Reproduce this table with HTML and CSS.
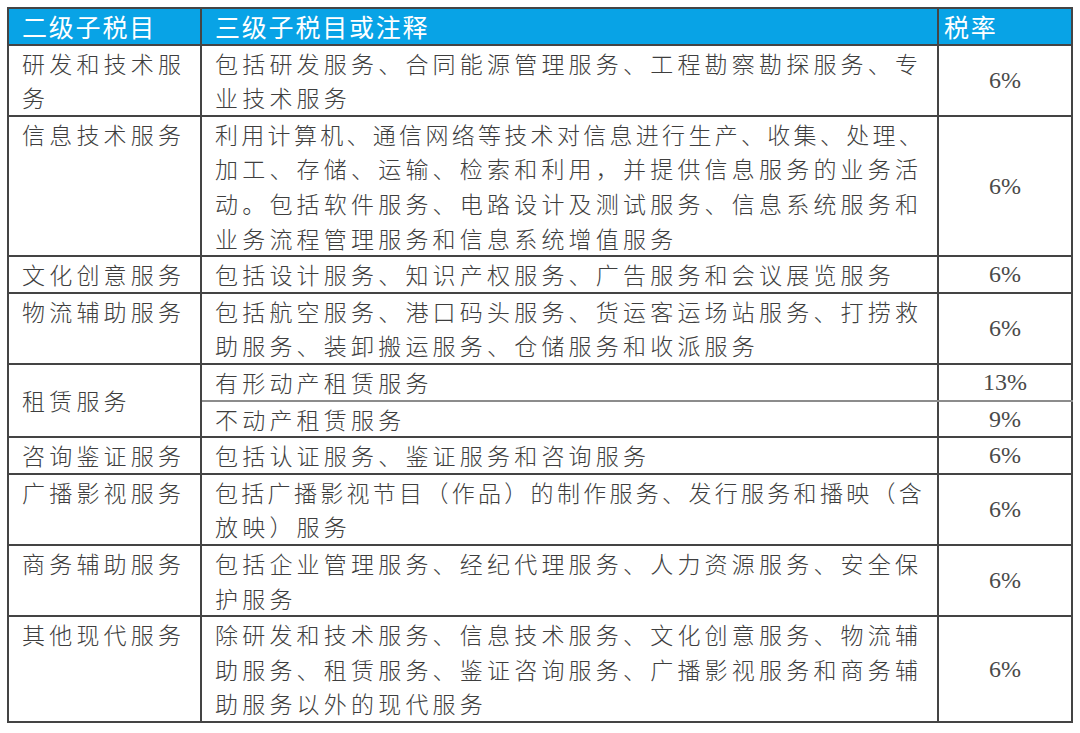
FILE: index.html
```html
<!DOCTYPE html>
<html lang="zh-CN">
<head>
<meta charset="utf-8">
<title>现代服务税目</title>
<link rel="stylesheet" href="styles.css">
</head>
<body>
<table class="tax">
  <colgroup>
    <col class="c1">
    <col class="c2">
    <col class="c3">
  </colgroup>
  <thead>
    <tr>
      <th>二级子税目</th>
      <th>三级子税目或注释</th>
      <th class="h-rate">税率</th>
    </tr>
  </thead>
  <tbody>
    <tr>
      <td class="name">研发和技术服<br>务</td>
      <td class="desc">包括研发服务、合同能源管理服务、工程勘察勘探服务、专<br>业技术服务</td>
      <td class="rate">6%</td>
    </tr>
    <tr>
      <td class="name">信息技术服务</td>
      <td class="desc"><span class="tight">利用计算机、通信网络等技术对信息进行生产、收集、处理、</span><br>加工、存储、运输、检索和利用，并提供信息服务的业务活<br>动。包括软件服务、电路设计及测试服务、信息系统服务和<br>业务流程管理服务和信息系统增值服务</td>
      <td class="rate">6%</td>
    </tr>
    <tr>
      <td class="name">文化创意服务</td>
      <td class="desc">包括设计服务、知识产权服务、广告服务和会议展览服务</td>
      <td class="rate">6%</td>
    </tr>
    <tr>
      <td class="name">物流辅助服务</td>
      <td class="desc">包括航空服务、港口码头服务、货运客运场站服务、打捞救<br>助服务、装卸搬运服务、仓储服务和收派服务</td>
      <td class="rate">6%</td>
    </tr>
    <tr class="split-top">
      <td class="name mid" rowspan="2">租赁服务</td>
      <td class="desc">有形动产租赁服务</td>
      <td class="rate">13%</td>
    </tr>
    <tr class="split-bottom">
      <td class="desc">不动产租赁服务</td>
      <td class="rate">9%</td>
    </tr>
    <tr>
      <td class="name">咨询鉴证服务</td>
      <td class="desc">包括认证服务、鉴证服务和咨询服务</td>
      <td class="rate">6%</td>
    </tr>
    <tr>
      <td class="name">广播影视服务</td>
      <td class="desc"><span class="tight">包括广播影视节目（作品）的制作服务、发行服务和播映（含</span><br>放映）服务</td>
      <td class="rate">6%</td>
    </tr>
    <tr>
      <td class="name">商务辅助服务</td>
      <td class="desc">包括企业管理服务、经纪代理服务、人力资源服务、安全保<br>护服务</td>
      <td class="rate">6%</td>
    </tr>
    <tr>
      <td class="name">其他现代服务</td>
      <td class="desc">除研发和技术服务、信息技术服务、文化创意服务、物流辅<br>助服务、租赁服务、鉴证咨询服务、广播影视服务和商务辅<br>助服务以外的现代服务</td>
      <td class="rate">6%</td>
    </tr>
  </tbody>
</table>
</body>
</html>
```

FILE: styles.css
```css
html, body {
  margin: 0;
  padding: 0;
  background: #ffffff;
}

body {
  padding: 7px 0 0 7px;
  font-family: "Noto Sans CJK SC", "Noto Sans", sans-serif;
}

.tax {
  border-collapse: collapse;
  table-layout: fixed;
  width: 1064px;
}

.c1 { width: 193px; }
.c2 { width: 737px; }
.c3 { width: 134px; }

.tax th,
.tax td {
  border: 2px solid #444444;
  padding: 0 0 0 13px;
  font-size: 23px;
  line-height: 34.6px;
  letter-spacing: 4.2px;
  white-space: nowrap;
  text-align: left;
  vertical-align: top;
}

.tax th {
  background: #08a3e6;
  color: #ffffff;
  font-size: 25px;
  letter-spacing: 1.8px;
  font-weight: 400;
  vertical-align: middle;
}

.tax th.h-rate {
  padding-left: 5px;
}

.tax td {
  color: #3e3e3e;
  font-weight: 300;
}

.tax td.mid {
  vertical-align: middle;
}

.tax .tight {
  letter-spacing: 3.3px;
}

.tax td.rate {
  padding: 0;
  text-align: center;
  vertical-align: middle;
  font-family: "Liberation Serif", "DejaVu Serif", serif;
  font-size: 24px;
  font-weight: 400;
  letter-spacing: 0;
  color: #4a4a4a;
}

.tax tr.split-top td.desc,
.tax tr.split-top td.rate {
  border-bottom-color: #8c8c8c;
}
```
